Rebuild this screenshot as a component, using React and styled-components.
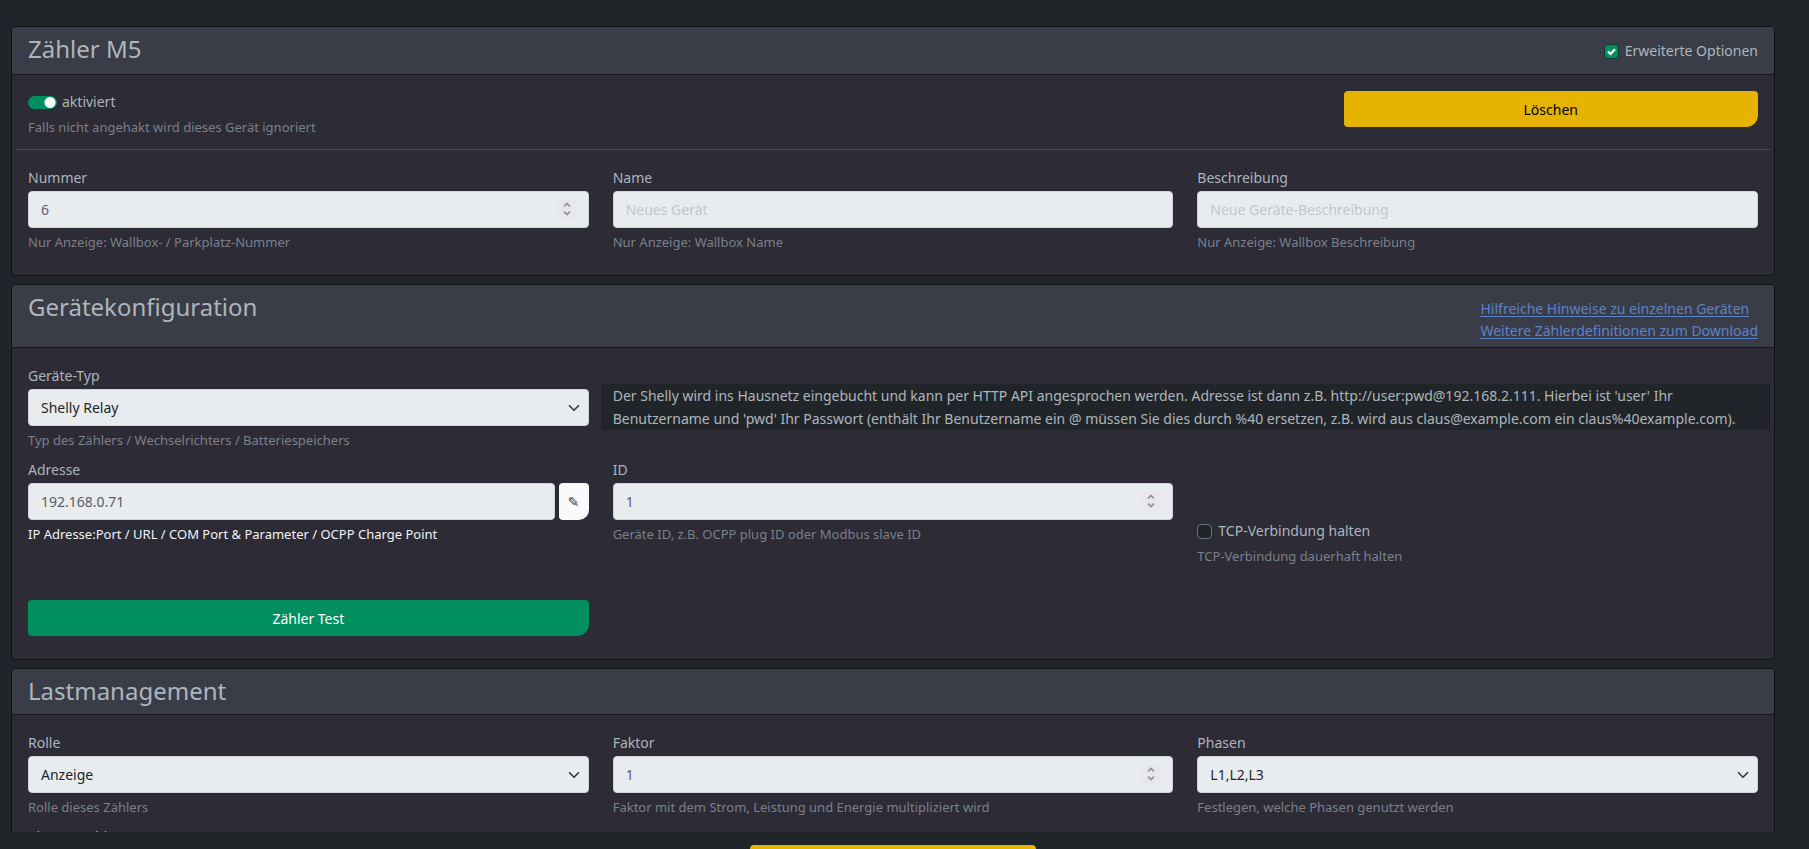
import React, { useState } from "react";
import styled, { createGlobalStyle, css } from "styled-components";

const GlobalStyle = createGlobalStyle`
  *, *::before, *::after {
    box-sizing: border-box;
  }
  body {
    margin: 0;
    background: #212529;
    color: #adb5bd;
    font-family: "Noto Sans", "Open Sans", sans-serif;
    font-size: 14px;
    line-height: 22px;
  }
  button, input, select {
    font-family: inherit;
    font-size: 14px;
  }
`;

const Page = styled.div`
  display: flex;
  flex-direction: column;
  height: 100vh;
  overflow: hidden;
`;

const Main = styled.main`
  flex: 1;
  min-height: 0;
  overflow: hidden;
  padding: 26px 34px 0 11px;
`;

const Footer = styled.footer`
  display: flex;
  flex: none;
  justify-content: center;
  align-items: flex-start;
  height: 17px;
  padding: 13px 34px 0 11px;
`;

const Card = styled.section`
  margin-bottom: 8px;
  border: 1px solid #111216;
  border-radius: 4px;
  background: #2c2b36;
  overflow: hidden;
`;

const CardHeader = styled.header`
  display: flex;
  justify-content: space-between;
  align-items: flex-start;
  padding: 0 16px;
  border-bottom: 1px solid #16171b;
  background: #3a3d48;
`;

const CardTitle = styled.h2`
  margin: 7px 0 9px;
  font-size: 24px;
  font-weight: 400;
  line-height: 29px;
`;

const CardBody = styled.div`
  padding: 16px 4px 23px;
`;

const HeaderOption = styled.div`
  padding: 13px 0 12px;
`;

const HeaderLinks = styled.nav`
  display: flex;
  flex-direction: column;
  align-items: flex-start;
  padding: 13px 0 5px;
`;

const HeaderLink = styled.a`
  color: #5a82c8;
  text-underline-offset: 2px;
`;

const Row = styled.div`
  display: grid;
  grid-template-columns: repeat(12, 1fr);
  align-items: start;

  & + & {
    margin-top: 8px;
  }
`;

const Col = styled.div`
  grid-column: span ${(props) => props.$span || 4};
  padding: 0 12px;
`;

const Divider = styled.hr`
  margin: 12px 0 16px;
  border: 0;
  border-top: 1px solid #4c4c58;
`;

const Info = styled.div`
  grid-column: span 8;
  align-self: center;
  padding: 0 12px;
  background: #212529;
  line-height: 23px;
`;

const Label = styled.label`
  display: block;
  margin-bottom: 1px;
  line-height: 24px;
`;

const Help = styled.div`
  margin-top: 5px;
  color: ${(props) => (props.$bright ? "#f1f3f5" : "#7c808a")};
  font-size: 13px;
  line-height: 19px;
`;

const controlStyle = css`
  display: block;
  flex: 1;
  width: 100%;
  min-width: 0;
  height: 37px;
  margin: 0;
  padding: 0 12px;
  border: 1px solid #ced4da;
  border-radius: 4px;
  background: #e9ecef;
  appearance: none;
`;

const Input = styled.input`
  ${controlStyle}
  color: #595c66;

  &::placeholder {
    color: #c1c7cd;
    opacity: 1;
  }
  &[type="number"] {
    appearance: textfield;
  }
  &::-webkit-inner-spin-button {
    display: none;
  }
`;

const Select = styled.select`
  ${controlStyle}
  color: #212529;
`;

const ControlBox = styled.div`
  position: relative;
  display: flex;
  gap: 4px;
`;

const Spinner = styled.svg`
  position: absolute;
  top: 9px;
  right: 13px;
  border-radius: 2px;
  background: #e9e6ec;
  pointer-events: none;
`;

const Chevron = styled.svg`
  position: absolute;
  top: 13px;
  right: 9px;
  pointer-events: none;
`;

const CheckLine = styled.div`
  display: flex;
  align-items: center;
  gap: ${(props) => (props.$switch ? "5px" : "6px")};
`;

const CheckWrap = styled.span`
  display: grid;

  & > * {
    grid-area: 1 / 1;
  }
  & > svg {
    pointer-events: none;
  }
`;

const CheckInput = styled.input`
  width: 15px;
  height: 15px;
  margin: 0;
  border: 1px solid #6b7479;
  border-radius: 4px;
  background: #212529;
  appearance: none;

  &:checked {
    border-color: #17342f;
    background: #028f5f;
  }
`;

const SwitchInput = styled.input`
  width: 29px;
  height: 13px;
  margin: 0;
  border: 0;
  border-radius: 7px;
  background: #6b7479 radial-gradient(circle at 7px 50%, #fff 5px, transparent 6px);
  appearance: none;

  &:checked {
    background: #028f5f radial-gradient(circle at 22px 50%, #fff 5px, transparent 6px);
  }
`;

const TcpOption = styled.div`
  margin-top: 62px;
`;

const Button = styled.button`
  display: block;
  width: 100%;
  height: 36px;
  padding: 0 12px;
  border: 0;
  border-radius: 4px 4px 12px 4px;
  background: ${(props) => (props.$success ? "#028f5f" : "#e6b400")};
  color: ${(props) => (props.$success ? "#fff" : "#000")};
`;

const TestRow = styled(Row)`
  padding-top: 26px;
`;

const SaveButton = styled(Button)`
  flex: none;
  width: 286px;
`;

const EditButton = styled.button`
  flex: 0 0 30px;
  padding: 0;
  border: 0;
  border-radius: 4px 4px 10px 4px;
  background: #f8f9fa;
  color: #444;
  font-family: "DejaVu Sans", sans-serif;
`;

const Check = ({ id, label, checked, onChange }) => (
  <CheckLine>
    <CheckWrap>
      <CheckInput type="checkbox" id={id} checked={checked} onChange={onChange} />
      {checked && (
        <svg width="15" height="15" viewBox="0 0 15 15" fill="none">
          <path d="M4 7.6l2.5 2.4L11 5.2" stroke="#fff" strokeWidth="2.2" />
        </svg>
      )}
    </CheckWrap>
    <label htmlFor={id}>{label}</label>
  </CheckLine>
);

const TextField = ({ id, label, help, bright, type = "text", children, ...rest }) => (
  <Col>
    <Label htmlFor={id}>{label}</Label>
    <ControlBox>
      <Input id={id} type={type} {...rest} />
      {type === "number" && (
        <Spinner width="18" height="19" viewBox="0 0 18 19" fill="none">
          <path
            d="M6 6.5L9 3.5l3 3M6 11.5l3 3 3-3"
            stroke="#8d8c98"
            strokeWidth="1.6"
          />
        </Spinner>
      )}
      {children}
    </ControlBox>
    {help && <Help $bright={bright}>{help}</Help>}
  </Col>
);

const SelectField = ({ id, label, help, options }) => (
  <Col>
    <Label htmlFor={id}>{label}</Label>
    <ControlBox>
      <Select id={id}>
        {options.map((option) => (
          <option key={option}>{option}</option>
        ))}
      </Select>
      <Chevron width="12" height="12" viewBox="0 0 16 16" fill="none">
        <path
          d="m2 5 6 6 6-6"
          stroke="#343a40"
          strokeWidth="2.2"
          strokeLinecap="round"
          strokeLinejoin="round"
        />
      </Chevron>
    </ControlBox>
    {help && <Help>{help}</Help>}
  </Col>
);

const App = () => {
  const [advanced, setAdvanced] = useState(true);
  const [enabled, setEnabled] = useState(true);
  const [keepTcp, setKeepTcp] = useState(false);

  return (
    <Page>
      <GlobalStyle />
      <Main>
        <Card>
          <CardHeader>
            <CardTitle>Zähler M5</CardTitle>
            <HeaderOption>
              <Check
                id="advanced"
                label="Erweiterte Optionen"
                checked={advanced}
                onChange={() => setAdvanced(!advanced)}
              />
            </HeaderOption>
          </CardHeader>
          <CardBody>
            <Row>
              <Col $span={9}>
                <CheckLine $switch>
                  <SwitchInput
                    type="checkbox"
                    role="switch"
                    id="enabled"
                    checked={enabled}
                    onChange={() => setEnabled(!enabled)}
                  />
                  <label htmlFor="enabled">aktiviert</label>
                </CheckLine>
                <Help>Falls nicht angehakt wird dieses Gerät ignoriert</Help>
              </Col>
              <Col $span={3}>
                <Button type="button">Löschen</Button>
              </Col>
            </Row>
            <Divider />
            <Row>
              <TextField
                id="number"
                type="number"
                label="Nummer"
                defaultValue="6"
                help="Nur Anzeige: Wallbox- / Parkplatz-Nummer"
              />
              <TextField
                id="name"
                label="Name"
                placeholder="Neues Gerät"
                help="Nur Anzeige: Wallbox Name"
              />
              <TextField
                id="description"
                label="Beschreibung"
                placeholder="Neue Geräte-Beschreibung"
                help="Nur Anzeige: Wallbox Beschreibung"
              />
            </Row>
          </CardBody>
        </Card>

        <Card>
          <CardHeader>
            <CardTitle>Gerätekonfiguration</CardTitle>
            <HeaderLinks>
              <HeaderLink href="#hinweise">
                Hilfreiche Hinweise zu einzelnen Geräten
              </HeaderLink>
              <HeaderLink href="#download">
                Weitere Zählerdefinitionen zum Download
              </HeaderLink>
            </HeaderLinks>
          </CardHeader>
          <CardBody>
            <Row>
              <SelectField
                id="type"
                label="Geräte-Typ"
                options={["Shelly Relay"]}
                help="Typ des Zählers / Wechselrichters / Batteriespeichers"
              />
              <Info>
                Der Shelly wird ins Hausnetz eingebucht und kann per HTTP API
                angesprochen werden. Adresse ist dann z.B.
                http://user:pwd@192.168.2.111. Hierbei ist 'user' Ihr
                Benutzername und 'pwd' Ihr Passwort (enthält Ihr Benutzername
                ein @ müssen Sie dies durch %40 ersetzen, z.B. wird aus
                claus@example.com ein claus%40example.com).
              </Info>
            </Row>
            <Row>
              <TextField
                id="address"
                label="Adresse"
                defaultValue="192.168.0.71"
                help="IP Adresse:Port / URL / COM Port & Parameter / OCPP Charge Point"
                bright
              >
                <EditButton type="button" aria-label="Adresse bearbeiten">
                  ✎
                </EditButton>
              </TextField>
              <TextField
                id="device-id"
                type="number"
                label="ID"
                defaultValue="1"
                help="Geräte ID, z.B. OCPP plug ID oder Modbus slave ID"
              />
              <Col>
                <TcpOption>
                  <Check
                    id="keep-tcp"
                    label="TCP-Verbindung halten"
                    checked={keepTcp}
                    onChange={() => setKeepTcp(!keepTcp)}
                  />
                  <Help>TCP-Verbindung dauerhaft halten</Help>
                </TcpOption>
              </Col>
            </Row>
            <TestRow>
              <Col>
                <Button type="button" $success>
                  Zähler Test
                </Button>
              </Col>
            </TestRow>
          </CardBody>
        </Card>

        <Card>
          <CardHeader>
            <CardTitle>Lastmanagement</CardTitle>
          </CardHeader>
          <CardBody>
            <Row>
              <SelectField
                id="role"
                label="Rolle"
                options={["Anzeige"]}
                help="Rolle dieses Zählers"
              />
              <TextField
                id="factor"
                type="number"
                label="Faktor"
                defaultValue="1"
                help="Faktor mit dem Strom, Leistung und Energie multipliziert wird"
              />
              <SelectField
                id="phases"
                label="Phasen"
                options={["L1,L2,L3"]}
                help="Festlegen, welche Phasen genutzt werden"
              />
            </Row>
            <Row>
              <SelectField
                id="phase-choice"
                label="Phasenwahl"
                options={["Standard"]}
              />
            </Row>
          </CardBody>
        </Card>
      </Main>
      <Footer>
        <SaveButton type="button" aria-label="Speichern" />
      </Footer>
    </Page>
  );
};

export default App;
